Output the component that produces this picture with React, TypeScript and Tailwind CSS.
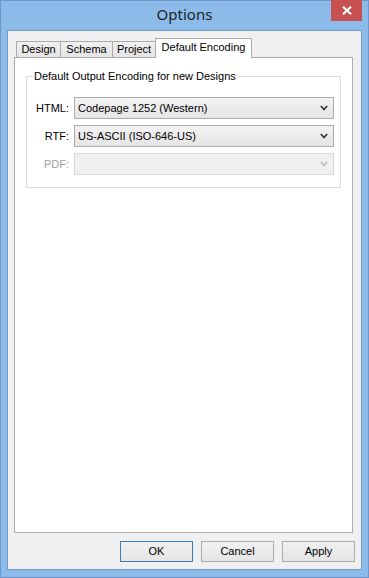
import React from 'react';

const tabs = [
  { name: 'Design', w: 'w-[44px]' },
  { name: 'Schema', w: 'w-[52px]' },
  { name: 'Project', w: 'w-[43px]' },
];

const rows = [
  { label: 'HTML:', value: 'Codepage 1252 (Western)', disabled: false },
  { label: 'RTF:', value: 'US-ASCII (ISO-646-US)', disabled: false },
  { label: 'PDF:', value: '', disabled: true },
];

// little "v" arrow used on the combo boxes
const Chevron = ({ disabled }: { disabled: boolean }) => (
  <svg width="8" height="6" viewBox="0 0 8 6" className="shrink-0">
    <path
      d="M0.8 1 L4 4.4 L7.2 1"
      fill="none"
      stroke={disabled ? '#c2c2c2' : '#3c3c3c'}
      strokeWidth="1.8"
    />
  </svg>
);

const Combo = ({ value, disabled }: { value: string; disabled: boolean }) => (
  <div
    className={`flex-1 h-[22px] flex items-center justify-between pl-[3px] pr-[5px] border ${
      disabled
        ? 'border-[#d9d9d9] bg-[#f0f0f0]'
        : 'border-[#acacac] bg-gradient-to-b from-[#f2f2f2] to-[#e5e5e5]'
    }`}
  >
    <span className="text-[#000] whitespace-nowrap">{value}</span>
    <Chevron disabled={disabled} />
  </div>
);

const DlgButton = ({ label, primary }: { label: string; primary?: boolean }) => (
  <div
    className={`w-[73px] h-[21px] flex items-center justify-center border bg-gradient-to-b from-[#f0f0f0] to-[#e5e5e5] ${
      primary ? 'border-[#3c7fb1]' : 'border-[#acacac]'
    }`}
  >
    {label}
  </div>
);

export default function App() {
  return (
    <div
      className="relative w-[369px] h-[578px] border border-[#6d97c8] bg-[#8cbbea] flex flex-col"
      style={{ fontFamily: '"Liberation Sans", Arial, sans-serif' }}
    >
      {/* title bar */}
      <div className="h-[29px] flex items-center justify-center pb-[3px]">
        <span
          className="text-[15px] text-[#1e1e1e]"
          style={{ fontFamily: '"Noto Sans", "Open Sans", sans-serif' }}
        >
          Options
        </span>
      </div>
      <div className="absolute top-[-1px] right-[6px] w-[31px] h-[21px] bg-[#c75050] flex items-center justify-center">
        <svg width="10" height="9" viewBox="0 0 10 9">
          <path d="M1 0.8 L9 8.2 M9 0.8 L1 8.2" stroke="#fff" strokeWidth="2.2" />
        </svg>
      </div>

      {/* client area */}
      <div className="mx-[6px] border border-[#6f9bcc] bg-[#f0f0f0] h-[540px] text-[11px] text-black flex flex-col">
        <div className="pt-[6px] pl-[8px] flex items-end h-[26px]">
          {tabs.map((t) => (
            <div
              key={t.name}
              className={`${t.w} h-[16px] border-l border-t border-[#acacac] bg-gradient-to-b from-[#f0f0f0] to-[#e5e5e5] flex items-center justify-center`}
            >
              {t.name}
            </div>
          ))}
          <div className="relative z-10 w-[97px] h-[20px] -mb-px border-l border-t border-r border-[#acacac] bg-white flex items-center justify-center pb-[2px]">
            Default Encoding
          </div>
        </div>

        <div className="ml-[6px] mr-[8px] h-[476px] border border-[#acacac] bg-white px-[11px] pt-[12px]">
          <fieldset className="border border-[#dcdcdc] pl-[7px] pr-[6px] pb-[12px]">
            <legend className="-ml-[1px] px-[1px] leading-[13px]">
              Default Output Encoding for new Designs
            </legend>
            <div className="flex flex-col gap-[6px] pt-[14px]">
              {rows.map((r) => (
                <div key={r.label} className="flex items-center">
                  <span
                    className={`w-[35px] text-right mr-[5px] ${
                      r.disabled ? 'text-[#a0a0a0]' : 'text-black'
                    }`}
                  >
                    {r.label}
                  </span>
                  <Combo value={r.value} disabled={r.disabled} />
                </div>
              ))}
            </div>
          </fieldset>
        </div>

        <div className="flex justify-end gap-[8px] pr-[6px] pt-[8px]">
          <DlgButton label="OK" primary />
          <DlgButton label="Cancel" />
          <DlgButton label="Apply" />
        </div>
      </div>
    </div>
  );
}
